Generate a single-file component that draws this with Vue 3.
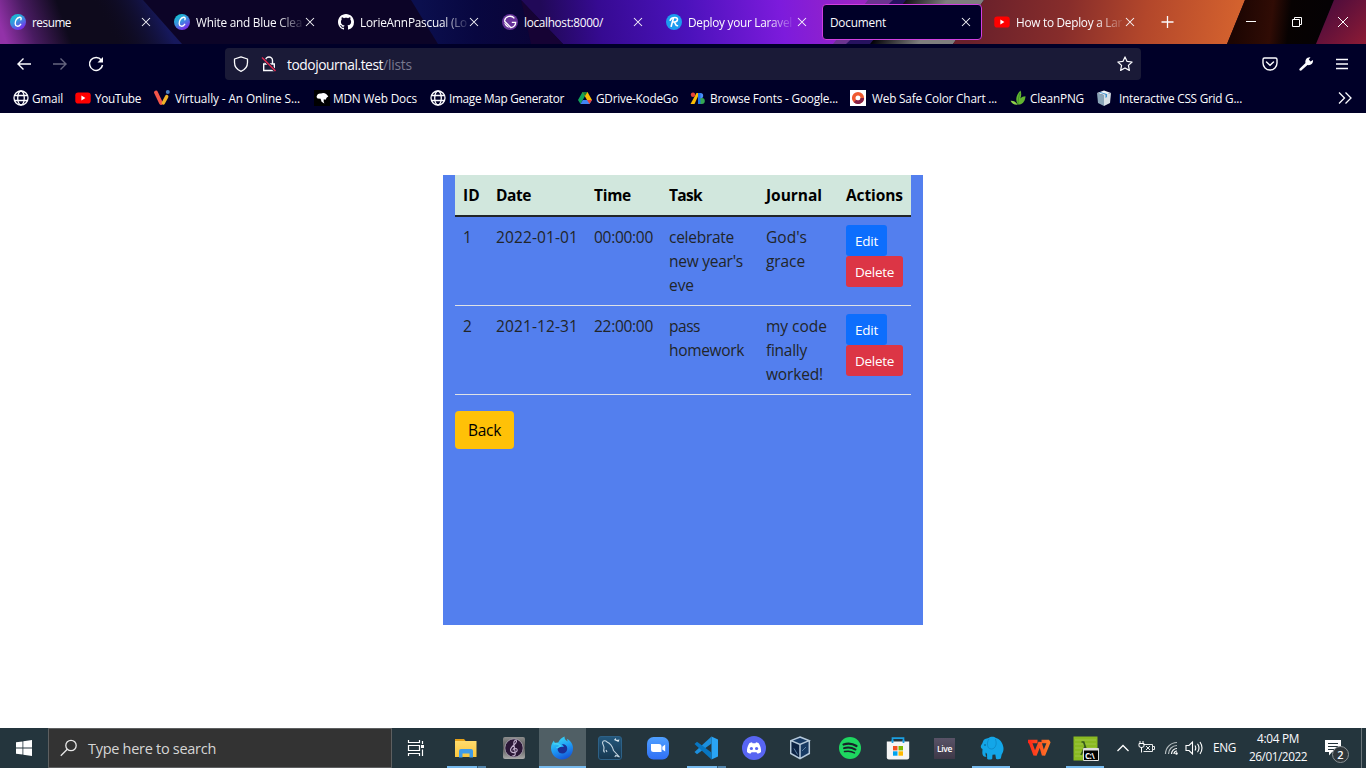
<script setup>
const tabs = [
  { title: 'resume', icon: 'canva', w: 39 },
  { title: 'White and Blue Clea', icon: 'canva', w: 106, fade: true },
  { title: 'LorieAnnPascual (Lo', icon: 'github', w: 107, fade: true },
  { title: 'localhost:8000/', icon: 'gatsby', w: 79 },
  { title: 'Deploy your Laravel', icon: 'render', w: 104, fade: true },
  { title: 'Document', active: true, w: 56 },
  { title: 'How to Deploy a Lar', icon: 'youtube', w: 106, fade: true },
]
const bookmarks = [
  { t: 'Gmail', icon: 'globe', w: 31, cell: 62, gap: 3 },
  { t: 'YouTube', icon: 'youtube', w: 46, cell: 79, gap: 4 },
  { t: 'Virtually - An Online S...', icon: 'virtually', w: 125, cell: 160, gap: 5 },
  { t: 'MDN Web Docs', icon: 'mdn', w: 84, cell: 116, gap: 3 },
  { t: 'Image Map Generator', icon: 'globe', w: 115, cell: 147, gap: 3 },
  { t: 'GDrive-KodeGo', icon: 'drive', w: 82, cell: 113, gap: 3 },
  { t: 'Browse Fonts - Google...', icon: 'fonts', w: 128, cell: 160, gap: 4 },
  { t: 'Web Safe Color Chart ...', icon: 'chart', w: 125, cell: 160, gap: 6 },
  { t: 'CleanPNG', icon: 'leaf', w: 54, cell: 86, gap: 4 },
  { t: 'Interactive CSS Grid G...', icon: 'cube', w: 123, cell: 150, gap: 7 },
]
const heads = [['ID', 17], ['Date', 35], ['Time', 37], ['Task', 33], ['Journal', 56], ['Actions', 57]]
const rows = [
  [[['1', 8]], [['2022-01-01', 82]], [['00:00:00', 59]],
    [['celebrate', 65], ["new year's", 74], ['eve', 25]], [["God's", 41], ['grace', 39]]],
  [[['2', 8]], [['2021-12-31', 82]], [['22:00:00', 59]],
    [['pass', 31], ['homework', 75]], [['my code', 61], ['finally', 41], ['worked!', 57]]],
]
const apps = [
  { icon: 'explorer', line: 'multi' }, { icon: 'music' }, { icon: 'firefox', on: true },
  { icon: 'mysql' }, { icon: 'zoom' }, { icon: 'vscode', line: 'multi' }, { icon: 'discord' },
  { icon: 'vbox' }, { icon: 'spotify' }, { icon: 'store', s: true }, { icon: 'live', s: true },
  { icon: 'elephant', s: true, line: 'one' }, { icon: 'wps', s: true }, { icon: 'cmd', s: true, line: 'one' },
]
// Tightens or loosens tracking so that a label takes the given width.
const vFit = {
  mounted(el, { value }) {
    if (!value) return
    const r = document.createRange()
    r.selectNodeContents(el)
    const natural = r.getBoundingClientRect().width
    el.style.letterSpacing = (value - natural) / el.textContent.length + 'px'
  },
}
</script>

<template>
  <div class="screen">
    <svg class="defs" width="0" height="0">
      <defs>
        <linearGradient id="gCanva" x1="0" y1="0" x2=".6" y2="1"><stop offset=".1" stop-color="#12c3cf" /><stop offset=".55" stop-color="#3b8fe0" /><stop offset="1" stop-color="#7a2be8" /></linearGradient>
        <linearGradient id="gFire" x1=".2" y1="0" x2=".6" y2="1"><stop offset="0" stop-color="#3fe0f5" /><stop offset=".5" stop-color="#1f9ff5" /><stop offset="1" stop-color="#1554d8" /></linearGradient>
        <linearGradient id="gWps" x1="0" y1="0" x2="1" y2="0"><stop offset="0" stop-color="#ff2418" /><stop offset="1" stop-color="#ff7a28" /></linearGradient>
        <linearGradient id="gZoom" x1="0" y1="0" x2="0" y2="1"><stop offset="0" stop-color="#4fa0ff" /><stop offset="1" stop-color="#2f6ff5" /></linearGradient>
        <linearGradient id="gFolder" x1="0" y1="0" x2="0" y2="1"><stop offset="0" stop-color="#ffdc6e" /><stop offset="1" stop-color="#fbc63c" /></linearGradient>
        <linearGradient id="gMetal" x1="0" y1="0" x2="0" y2="1"><stop offset="0" stop-color="#8d8d8d" /><stop offset=".5" stop-color="#555" /><stop offset="1" stop-color="#aaa" /></linearGradient>
        <linearGradient id="gMysql" x1="0" y1="0" x2="0" y2="1"><stop offset="0" stop-color="#24587d" /><stop offset="1" stop-color="#17374f" /></linearGradient>
      </defs>
      <symbol id="canva" viewBox="0 0 16 16"><circle cx="8" cy="8" r="8" fill="url(#gCanva)" /><path d="M10.900 5.800c.7-1.700 0-2.700-1.300-2.500C6.800 3.700 5 7 5.200 9.700c.2 3 3.400 3.400 5.500.6" fill="none" stroke="#fff" stroke-width="1.400" stroke-linecap="round" /></symbol>
      <symbol id="github" viewBox="0 0 16 16"><path fill="#fff" d="M8 0C3.580 0 0 3.580 0 8c0 3.540 2.290 6.530 5.470 7.590.4.070.55-.17.55-.38 0-.19-.010-.82-.010-1.490-2.010.37-2.530-.49-2.690-.94-.09-.23-.48-.94-.82-1.130-.28-.15-.68-.52-.010-.53.63-.010 1.080.58 1.230.82.72 1.210 1.870.87 2.330.66.070-.52.28-.87.51-1.070-1.780-.2-3.640-.89-3.640-3.950 0-.87.31-1.590.82-2.150-.080-.2-.36-1.020.080-2.120 0 0 .67-.21 2.200.82.64-.18 1.320-.27 2-.27s1.360.09 2 .27c1.530-1.040 2.200-.82 2.200-.82.44 1.100.16 1.920.080 2.120.51.56.82 1.270.82 2.150 0 3.070-1.870 3.750-3.650 3.950.29.25.54.73.54 1.480 0 1.070-.010 1.930-.010 2.200 0 .21.15.46.55.38A8.010 8.010 0 0 0 16 8c0-4.420-3.580-8-8-8z" /></symbol>
      <symbol id="gatsby" viewBox="0 0 16 16"><circle cx="8" cy="8" r="8" fill="#663399" /><path d="M2.200 8.300 7.700 13.800A5.800 5.800 0 0 1 2.200 8.300z" fill="#fff" /><path d="M2.400 7 9 13.700A5.800 5.800 0 0 0 13.700 8.300H9.800M12.400 4.300A5.700 5.700 0 0 0 2.500 6.800" fill="none" stroke="#fff" stroke-width="1.300" /></symbol>
      <symbol id="render" viewBox="0 0 16 16"><circle cx="8" cy="8" r="8" fill="#1c9cf0" /><path d="M4.200 6.200C5 3.800 7 3.500 9 3.500c3.600 0 3.200 4-.6 4.500L6.700 8M7.400 4.200 5.200 12.300M8.600 8.200c.8 1 .6 3.600 2.900 3.500" fill="none" stroke="#fff" stroke-width="1.600" stroke-linecap="round" /></symbol>
      <symbol id="youtube" viewBox="0 0 16 16"><rect x=".3" y="2.400" width="15.400" height="11.200" rx="2.800" fill="#f00" /><path d="M6.400 5.600v4.800L10.400 8z" fill="#fff" /></symbol>
      <symbol id="globe" viewBox="0 0 16 16"><g fill="none" stroke="#fbfbfe" stroke-width="1.300"><circle cx="8" cy="8" r="7" /><ellipse cx="8" cy="8" rx="3.300" ry="7" /><path d="M1.500 5.500h13M1.500 10.500h13" /></g></symbol>
      <symbol id="virtually" viewBox="0 0 16 16"><path d="M2 2.500 7 13" stroke="#f4554a" stroke-width="3.800" stroke-linecap="round" /><path d="M12.700 6.600 9.300 13" stroke="#f0b429" stroke-width="3.400" stroke-linecap="round" /><circle cx="13.800" cy="2" r="2" fill="#4a7fc0" /></symbol>
      <symbol id="mdn" viewBox="0 0 16 16"><rect width="16" height="16" fill="#000" /><path d="M2.500 7C3 4 5 3 7 3.500 10 2 13 4 14.300 6.500l-1.500 1-1.300 2.200-1.700-.5-.2 2 .8 2.300-2.800-1.700-1-3-3-.2z" fill="#fff" /></symbol>
      <symbol id="drive" viewBox="0 0 16 16"><path d="M5.500 2 1 10l2.500 4L8 6z" fill="#12a45a" /><path d="M5.500 2h5L15 10h-5z" fill="#fbbc04" /><path d="M10.500 2h-5L8 6z" fill="#188038" /><path d="M3.500 14h9L15 10H5.800z" fill="#4285f4" /><path d="m12.500 14 2.500-4h-5z" fill="#ea4335" /></symbol>
      <symbol id="fonts" viewBox="0 0 16 16"><path d="M6.500 3h3L4.500 14H.5z" fill="#fbbc04" /><circle cx="3" cy="4.700" r="2.200" fill="#ea4335" /><path d="M8 3h3v11H8z" fill="#1a73e8" /><path d="M10.500 3a2.700 2.700 0 0 1 0 5.400z" fill="#4b8df8" /><path d="M10.500 8h1.300a3 3 0 0 1 0 6h-1.300z" fill="#34a853" /></symbol>
      <symbol id="chart" viewBox="0 0 16 16"><rect width="16" height="16" fill="#fff" /><circle cx="8" cy="8" r="4.300" fill="none" stroke="#ef5a30" stroke-width="3.600" /><path d="M5 11A4.300 4.300 0 0 0 12.300 8" fill="none" stroke="#842047" stroke-width="3.600" /></symbol>
      <symbol id="leaf" viewBox="0 0 16 16"><path d="M7.500 14C5 10 6.500 4 10.500.5c1.200 3 .8 5.500-.2 8 1.500-1.500 3-2.300 5.200-2.300-.2 4-2 7.500-6 8.300H8z" fill="#62b531" /><path d="M7.500 14.500C5.500 11 3 10.500.5 10.700c1.500 3 4 4.500 7.500 4z" fill="#8fd14a" /><path d="M8 14C8 10 8.800 6 10 3" fill="none" stroke="#3a8d22" stroke-width=".8" /></symbol>
      <symbol id="cube" viewBox="0 0 16 16"><path d="m1 3 7 2v11l-6-3z" fill="#8aa5b8" /><path d="m8 5 7-2-1 10-6 3z" fill="#d8e0e6" /><path d="m1 3 7-2.500L15 3 8 5z" fill="#eff4f7" /><path d="m4 2 7 2v3L9.500 8V4.600L3 2.600z" fill="#3c91cf" /></symbol>
      <symbol id="x" viewBox="0 0 16 16"><path d="m4 4 8 8m0-8-8 8" stroke="#fbfbfe" stroke-width="1.050" /></symbol>

      <symbol id="explorer" viewBox="0 0 24 24"><path d="M1 3h9l2 2.500H1z" fill="#e6a117" /><path d="M1 5h21.500v16H1z" fill="url(#gFolder)" /><path d="M5 21.500V15q0-2 2-2h10q2 0 2 2v6.500h-3.500v-4h-7v4z" fill="#3f9be8" /></symbol>
      <symbol id="music" viewBox="0 0 24 24"><rect x="1" y="1" width="22" height="22" rx="2" fill="url(#gMetal)" /><circle cx="12" cy="12" r="9.200" fill="#2b1737" stroke="#b9b3c0" stroke-width=".8" /><path d="M10.500 19.500c2 1 3 -.5 2.700-2.500L11.800 7.500C11.400 4.500 14.500 3 14.500 5.500S8.500 10.500 8.500 14c.2 3.600 6.800 3.300 6.700 0-.2-2.600-4.400-2.200-4.100.4" fill="none" stroke="#c5b3d0" stroke-width="1.100" /></symbol>
      <symbol id="firefox" viewBox="0 0 24 24"><path d="M1 12C1 9 2.500 6 4 4.500c0 1 .5 2 1.200 2.600.8-.5 2-.7 3-.5C9.500 3.500 12 1.500 14.500.5c-.2 2.500 1.300 3.700 3 5 0-1-.2-1.900-.7-2.800 4 2 6.700 6 6.200 10.300C22.600 19 18 23.500 12 23.500 6 23.500 1 18.500 1 12z" fill="url(#gFire)" /><path d="M8 10c1.300 1.300 3.500 1.200 6 .8-.7-1.200-1.400-1.800-2.300-2.500 3.700-.3 5.800 1.800 5.500 5-.3 2.600-2.300 4.200-5 4.200-3.600 0-5.500-3.300-4.200-7.500z" fill="#1b2f96" /><path d="M3.500 8c2-.8 4.600-.4 7 1.700-1 1.200-3 1.500-4 2.300" fill="none" stroke="#41cff5" stroke-width="1.600" /></symbol>
      <symbol id="mysql" viewBox="0 0 24 24"><rect x=".5" y=".5" width="23" height="23" rx="2.500" fill="url(#gMysql)" stroke="#2d6187" /><path d="M6.500 16.500c-1.200-1.500-1-3-.5-4.500.2-2-1.500-3.500-1.500-5.500C5 4 7.800 4.500 9 6c4 1.500 5.500 4.500 6.500 8.500l6 6.500-3.700-1.500-1 1.500M8 14l1 2" fill="none" stroke="#c5d6e2" stroke-width="1.100" /><path d="m16 4 1.500-2 1 2 3-.5-1 2.500z" fill="#dce7ef" /></symbol>
      <symbol id="zoom" viewBox="0 0 24 24"><rect x="1" y="1" width="22" height="22.500" rx="6.500" fill="url(#gZoom)" /><path d="M5 8h8q2.500 0 2.500 2.500V16H7.500Q5 16 5 13.500z" fill="#fff" /><path d="M16.300 10.700 19.200 8.500v7l-2.900-2z" fill="#fff" /></symbol>
      <symbol id="vscode" viewBox="0 0 24 24"><path d="M17.500.5 24 3.500v17l-6.500 3z" fill="#2aa4f4" /><path d="M17.500.5v7L3 18.200.5 16z" fill="#1c8fdd" /><path d="M17.500 23.500v-7L3 5.800.5 8z" fill="#0876c2" /></symbol>
      <symbol id="discord" viewBox="0 0 24 24"><circle cx="12" cy="12" r="12" fill="#5865f2" /><path d="M7.500 7 10 6.300l.5 1h3l.5-1 2.500.7c1.800 2.500 2.800 5.500 2.500 9-1.300 1-2.600 1.500-3.700 1.600l-.8-1.400h-5l-.8 1.400C7.600 17.500 6.300 17 5 16c-.3-3.500.8-6.500 2.500-9z" fill="#fff" /><circle cx="9.400" cy="12.500" r="1.600" fill="#5865f2" /><circle cx="14.600" cy="12.500" r="1.600" fill="#5865f2" /></symbol>
      <symbol id="vbox" viewBox="0 0 24 24"><path d="M.5 4.500 10 .5l9.500 4v13L10 23l-9.500-5.500z" fill="#173a63" /><path d="M.5 4.500 10 8.500v14.500L.5 17.500z" fill="#0c2344" /><path d="m10 1 9 3.600-9 3.900-9-3.900zM10 8.500V23M19.300 4.700v12.800L10 22.700.7 17.500V4.700" fill="none" stroke="#b6c9da" stroke-width="1.500" /><path d="m4 12.500 3.500 6M16 11l-4 4" stroke="#5e82a6" /></symbol>
      <symbol id="spotify" viewBox="0 0 24 24"><circle cx="12" cy="12" r="11" fill="#1ed760" /><g fill="none" stroke="#17232a" stroke-linecap="round"><path d="M5.500 8.500c4-1.300 9.300-.8 13 1.500" stroke-width="2.200" /><path d="M6 12.200c4-1.200 8-.6 11.500 1.400" stroke-width="1.900" /><path d="M6.500 15.600c3.600-.9 7-.5 10 1.300" stroke-width="1.500" /></g></symbol>
      <symbol id="store" viewBox="0 0 24 24"><path d="M6.500 7V2.200h11V7" fill="none" stroke="#1ba0e2" stroke-width="1.700" /><path d="M.8 5.500h22.400v16q0 2-2 2H2.800q-2 0-2-2z" fill="#f5f5f5" /><path d="M6.500 7V4m11 3V4" stroke="#1ba0e2" stroke-width="1.700" /><path d="M7 10h4.500v4.400H7z" fill="#f25022" /><path d="M12.500 10H17v4.400h-4.500z" fill="#7fba00" /><path d="M7 15.300h4.500v4.400H7z" fill="#00a4ef" /><path d="M12.500 15.300H17v4.400h-4.500z" fill="#ffb900" /></symbol>
      <symbol id="elephant" viewBox="0 0 24 24"><path d="M.8 11C.5 9 2.500 8 3 5.500 3.500 3 6 2.500 8.500 2c2-1.800 5.500-1.800 7.500 0 4 1 7 5 7.500 10 .2 3-.8 5-1.800 6.500L20.800 22.500q-2.500 1.300-4.800.2l-.7-4.200-2.800.3-.3 4.200q-2.700 1-5 0L7 18l-1.200-1.500c-.5 1.500-.3 3 .7 4-2.500.8-4-.8-4.200-3.500L2.500 13q-1.500-.7-1.700-2z" fill="#13a6e8" /><path d="M9 3c-1.800 2-2 6-.8 8.500 2 2 4.300 1.800 6 .5 2.300-2 2.500-5.500 1.200-9" fill="none" stroke="#0c86c4" stroke-width=".8" /><circle cx="5" cy="9" r=".7" fill="#053a5c" /></symbol>
      <symbol id="wps" viewBox="0 0 24 24"><path d="M1 5.500h9.500M3 5.500 8 19l5-12.500L16.500 19 22 5.500h-7.500" fill="none" stroke="url(#gWps)" stroke-width="3.400" stroke-linejoin="bevel" /></symbol>
      <symbol id="cmd" viewBox="0 0 26 26"><path d="M.5.500h24v24H.5z" fill="#8aba22" /><path d="M2 4h21M2 8h21M2 12h21M2 16h21M2 20h21" stroke="#a4ca50" stroke-width=".8" /><path d="M8.500 6h2.200l4.300 13M12 10.500 8 19" fill="none" stroke="#35581d" stroke-width="1.700" /><path d="M10.500 12.500h15v12h-15z" fill="#000" stroke="#ddd" /><path d="M10.500 13.500h15" stroke="#ddd" stroke-width="2" /></symbol>
    </svg>

    <header class="strip">
      <svg class="theme" width="1366" height="44" viewBox="0 0 1366 44" preserveAspectRatio="none">
        <defs>
          <linearGradient id="a1" gradientUnits="userSpaceOnUse" x1="0" y1="24" x2="58" y2="4"><stop offset="0" stop-color="#9232a8" /><stop offset=".45" stop-color="#481b60" /><stop offset="1" stop-color="#0e0a1c" /></linearGradient>
          <linearGradient id="a2" gradientUnits="userSpaceOnUse" x1="115" y1="44" x2="163" y2="20"><stop offset="0" stop-color="#0e0a1c" stop-opacity="0" /><stop offset="1" stop-color="#16185c" /></linearGradient>
          <linearGradient id="a3" gradientUnits="userSpaceOnUse" x1="420" y1="0" x2="560" y2="0"><stop offset="0" stop-color="#0b0f4e" /><stop offset=".4" stop-color="#080740" /><stop offset="1" stop-color="#0b0334" /></linearGradient>
          <linearGradient id="a4" gradientUnits="userSpaceOnUse" x1="545" y1="40" x2="860" y2="0"><stop offset="0" stop-color="#210958" /><stop offset=".18" stop-color="#360a92" /><stop offset=".45" stop-color="#4b12bb" /><stop offset=".75" stop-color="#7d1bdc" /><stop offset="1" stop-color="#9b25c4" /></linearGradient>
          <linearGradient id="a5" gradientUnits="userSpaceOnUse" x1="975" y1="0" x2="1235" y2="44"><stop offset="0" stop-color="#69202b" /><stop offset=".35" stop-color="#872d2b" /><stop offset=".65" stop-color="#b3472b" /><stop offset="1" stop-color="#d4622e" /></linearGradient>
          <linearGradient id="a6" gradientUnits="userSpaceOnUse" x1="1235" y1="20" x2="1325" y2="30"><stop offset="0" stop-color="#1c0502" /><stop offset=".4" stop-color="#300c05" /><stop offset=".6" stop-color="#070202" /><stop offset="1" stop-color="#050204" /></linearGradient>
          <linearGradient id="a7" gradientUnits="userSpaceOnUse" x1="1320" y1="0" x2="1366" y2="44"><stop offset="0" stop-color="#450a3d" /><stop offset="1" stop-color="#8d1b35" /></linearGradient>
          <linearGradient id="a8" gradientUnits="userSpaceOnUse" x1="900" y1="0" x2="933" y2="22"><stop offset="0" stop-color="#030207" /><stop offset="1" stop-color="#7e7e7e" /></linearGradient>
        </defs>
        <path d="M0 0h1366v44H0z" fill="#0c0427" />
        <path d="M0 0h143l39 44H0z" fill="url(#a1)" />
        <path d="M70 0h73l39 44H70z" fill="url(#a2)" />
        <path d="M411 0h130l22 44H438z" fill="url(#a3)" />
        <path d="M521 0h350l-36 44H563z" fill="url(#a4)" />
        <path d="m521 0 42 44h-32z" fill="#160334" />
        <path d="M868 0h27l-45 44h-17z" fill="#6b348f" />
        <path d="M893 0h15l-36 44h-26z" fill="#26125f" />
        <path d="M906 0h78l-31 44h-83z" fill="url(#a8)" />
        <path d="M984 0h261l-18 44H953z" fill="url(#a5)" />
        <path d="M1245 0h89l-18 44h-89z" fill="url(#a6)" />
        <path d="M1334 0h32v44h-50z" fill="url(#a7)" />
      </svg>
      <div class="tabs">
        <div v-for="(t, i) in tabs" :key="i" class="tab" :class="{ active: t.active }">
          <svg v-if="t.icon" class="i16"><use :href="'#' + t.icon" /></svg>
          <span class="label"><span v-fit="t.w" :class="{ fade: t.fade }">{{ t.title }}</span></span>
          <svg class="i16 close"><use href="#x" /></svg>
        </div>
      </div>
      <svg class="i16 plus" viewBox="0 0 16 16"><path d="M7.500 2v12M1.500 8h12" stroke="#fbfbfe" stroke-width="1.300" /></svg>
      <div class="win">
        <svg width="46" height="44"><path d="M18 21.500h10" stroke="#fff" /></svg>
        <svg width="46" height="44"><path d="M18.500 19.500h7v7h-7zM20.500 19v-1.500h7v7H26" fill="none" stroke="#fff" /></svg>
        <svg width="46" height="44"><path d="m18 17 10 10m0-10-10 10" stroke="#fff" /></svg>
      </div>
    </header>

    <nav class="toolbar">
      <div class="navs">
        <svg class="i16" viewBox="0 0 16 16"><path d="M15 8H1.500M7.500 2.500 2 8l5.500 5.500" fill="none" stroke="#fbfbfe" stroke-width="1.400" /></svg>
        <svg class="i16" viewBox="0 0 16 16"><path d="M1 8h13.500M8.500 2.500 14 8l-5.500 5.500" fill="none" stroke="#65657f" stroke-width="1.400" /></svg>
        <svg class="i16" viewBox="0 0 16 16"><path d="M13.300 4A6.500 6.500 0 1 0 14.500 9" fill="none" stroke="#fbfbfe" stroke-width="1.500" /><path d="M9.500 6.500H15V1z" fill="#fbfbfe" /></svg>
      </div>
      <div class="url">
        <svg class="i16" viewBox="0 0 16 16"><path d="M8 .8 14.500 3v3.500c0 4-2 7-6.500 8.800C3.500 13.500 1.500 10.500 1.500 6.500V3z" fill="none" stroke="#fbfbfe" stroke-width="1.300" stroke-linejoin="round" /></svg>
        <svg class="i16 lock" viewBox="0 0 16 16"><path d="M2.700 8h10.600v6.500H2.700zM4.500 8V4.500a3.500 3.500 0 0 1 7 0V8" fill="none" stroke="#fbfbfe" stroke-width="1.400" /><path d="M1 1.500 14.500 15" stroke="#1a1a37" stroke-width="3" /><path d="M1 1.500 14.500 15" stroke="#e22850" stroke-width="1.400" /></svg>
        <span class="addr"><span v-fit="96">todojournal.test</span><span v-fit="29" class="dim">/lists</span></span>
        <svg class="i16 star" viewBox="0 0 16 16"><path d="m8 .9 2.100 4.500 5 .6-3.700 3.400 1 5L8 12l-4.400 2.400 1-5L.9 6l5-.6z" fill="none" stroke="#fbfbfe" stroke-width="1.200" stroke-linejoin="round" /></svg>
      </div>
      <div class="tools">
        <svg class="i16" viewBox="0 0 16 16"><path d="M2.500 2h11q1.500 0 1.500 1.500V7A7 7 0 0 1 1 7V3.500Q1 2 2.500 2zM4.500 6 8 9.300 11.500 6" fill="none" stroke="#fbfbfe" stroke-width="1.400" stroke-linecap="round" /></svg>
        <svg class="i16" viewBox="0 0 16 16"><path d="m1.300 13 6.200-6C6.800 4 9 .7 12.500 1.300L10.800 3.500 12.500 5.500 15 4c.5 3.300-2.500 5.800-5.500 5L3 14.800Q1 15 1.300 13z" fill="#fbfbfe" /></svg>
        <svg class="i16" viewBox="0 0 16 16"><path d="M2 3.500h12M2 8h12M2 12.500h12" stroke="#fbfbfe" stroke-width="1.300" /></svg>
      </div>
    </nav>

    <div class="marks">
      <div v-for="b in bookmarks" :key="b.t" class="mark" :style="{ width: b.cell + 'px', gap: b.gap + 'px' }">
        <svg class="i16"><use :href="'#' + b.icon" /></svg><span v-fit="b.w">{{ b.t }}</span>
      </div>
      <svg class="i16 more" viewBox="0 0 16 16"><path d="m2 2.500 5.500 5.500L2 13.500M8.500 2.500 14 8l-5.500 5.500" fill="none" stroke="#fbfbfe" stroke-width="1.300" /></svg>
    </div>

    <main class="page">
      <section class="card">
        <table>
          <colgroup><col class="c1"><col class="c2"><col class="c3"><col class="c4"><col class="c5"><col class="c6"></colgroup>
          <thead><tr><th v-for="h in heads" :key="h[0]"><span v-fit="h[1]">{{ h[0] }}</span></th></tr></thead>
          <tbody>
            <tr v-for="(r, i) in rows" :key="i">
              <td v-for="(c, j) in r" :key="j"><div v-for="l in c" :key="l[0]" v-fit="l[1]">{{ l[0] }}</div></td>
              <td class="acts">
                <button class="btn edit"><span v-fit="23">Edit</span></button>
                <button class="btn del"><span v-fit="39">Delete</span></button>
              </td>
            </tr>
          </tbody>
        </table>
        <button class="back"><span v-fit="33">Back</span></button>
      </section>
    </main>

    <footer class="taskbar">
      <div class="start"><svg width="16" height="16" viewBox="0 0 16 16"><path d="m0 2.300 6.500-.9v6.200H0zM7.300 1.300 16 0v7.600H7.300zM0 8.400h6.500v6.200L0 13.700zM7.300 8.400H16V16l-8.700-1.300z" fill="#fff" /></svg></div>
      <div class="search">
        <svg width="18" height="18" viewBox="0 0 18 18"><circle cx="11" cy="6.500" r="5.200" fill="none" stroke="#e8e8e8" stroke-width="1.300" /><path d="m7.300 10.300-6.500 6.500" stroke="#e8e8e8" stroke-width="1.300" /></svg>
        <span v-fit="128">Type here to search</span>
      </div>
      <div class="view"><svg width="18" height="18" viewBox="0 0 18 18"><path d="M1.500 1v2.500h11V1M1.500 17v-2.500h11V17M1.500 6.500h11v5h-11zM15.500 2v3M15.500 10.500V17" fill="none" stroke="#fff" stroke-width="1.200" /><path d="M14 6h3v3h-3z" fill="#fff" /></svg></div>
      <div v-for="a in apps" :key="a.icon" class="app" :class="{ s: a.s, on: a.on }">
        <span v-if="a.icon === 'live'" class="live"><span v-fit="15">Live</span></span>
        <svg v-else class="appicon" :class="a.icon"><use :href="'#' + a.icon" /></svg>
        <span v-if="a.icon === 'cmd'" class="prompt"><span v-fit="12">C:\_</span></span>
        <i v-if="a.line || a.on" class="line" :class="[a.line, { full: a.on }]"></i>
      </div>
      <div class="tray">
        <svg width="14" height="16"><path d="m1.500 11 5.500-5.500L12.500 11" fill="none" stroke="#fff" stroke-width="1.300" /></svg>
        <svg class="bat" width="17" height="16"><path d="M5.500 4.500h9v7h-9M15 6.500h1.500v3H15M8 6l4 4m0-4-4 4" fill="none" stroke="#e8eaeb" /><path d="M1 3.500h5v3q-2.500 2.500-5 0zM2 1v3M5 1v3M3.500 7v5.500" fill="none" stroke="#fff" /></svg>
        <svg class="wifi" width="14" height="16"><g fill="none"><path d="M1.500 14A11.500 11.500 0 0 1 13 2.500M4.500 14A8.500 8.500 0 0 1 13 5.500" stroke="#b4bcbf" stroke-width="1.200" /><path d="M7.500 14A5.500 5.500 0 0 1 13 8.500M10 14a3 3 0 0 1 3-3" stroke="#fff" stroke-width="1.200" /></g><circle cx="12.500" cy="13.500" r="1.200" fill="#fff" /></svg>
        <svg class="vol" width="18" height="16"><path d="M1 5.500h3L7.500 2v12L4 10.500H1zM10 5.500q1.500 2.500 0 5M12.500 3.700q3 4.300 0 8.600M15 2q4 6 0 12" fill="none" stroke="#fff" stroke-width="1.100" /></svg>
        <span class="eng"><span v-fit="23">ENG</span></span>
        <div class="clock"><div><span v-fit="42">4:04 PM</span></div><div><span v-fit="58">26/01/2022</span></div></div>
        <div class="note">
          <svg width="16" height="17"><path d="M0 1h16v12H7l-3 3.500V13H0z" fill="#fff" /><path d="M3 4.500h10M3 7.500h10M3 10.500h6" stroke="#24333a" /></svg>
          <b class="badge">2</b>
        </div>
        <i class="edge"></i>
      </div>
    </footer>
  </div>
</template>

<style>
body { background: #fff; overflow: hidden; }
</style>
<style scoped>
.screen { width: 1366px; height: 768px; display: flex; flex-direction: column; overflow: hidden; font-family: "Open Sans", "Noto Sans", sans-serif; font-size: 11.800px; color: #fbfbfe; white-space: nowrap; }
.screen * { box-sizing: border-box; }
svg { display: block; flex: none; }
.defs { position: absolute; }
.i16 { width: 16px; height: 16px; }
.strip { position: relative; height: 44px; flex: none; display: flex; align-items: center; }
.theme { position: absolute; inset: 0; }
.tabs { position: relative; display: flex; }
.tab { width: 164px; height: 44px; padding: 0 10px; display: flex; align-items: center; gap: 6px; }
.tab.active { width: 160px; height: 36px; margin: 4px 2px; padding: 0 7px; border: 1px solid #d03fe0; border-radius: 4px; background: #000028; }
.label { flex: 1; min-width: 0; line-height: 18px; }
.close { margin-left: -2px; }
.fade { display: inline-block; -webkit-mask-image: linear-gradient(90deg, #000 76%, rgba(0, 0, 0, .12)); mask-image: linear-gradient(90deg, #000 76%, rgba(0, 0, 0, .12)); }
.plus { position: relative; margin-left: 12px; }
.win { position: relative; margin-left: auto; display: flex; }
.toolbar { height: 40px; flex: none; background: #000028; display: flex; align-items: center; padding-right: 16px; }
.navs { width: 225px; display: flex; gap: 20px; padding-left: 16px; }
.url { width: 916px; height: 32px; border-radius: 4px; background: #1a1a37; display: flex; align-items: center; padding: 0 8px; }
.lock { margin-left: 12px; }
.addr { margin-left: 10px; padding-top: 1px; font-size: 13.800px; line-height: 20px; }
.dim { color: #78788f; }
.star { margin-left: auto; }
.tools { display: flex; gap: 20px; margin-left: auto; }
.marks { height: 29px; flex: none; background: #000028; display: flex; align-items: center; padding: 0 13px 1px; }
.mark { display: flex; align-items: center; flex: none; line-height: 18px; }
.more { margin-left: auto; }
.page { height: 615px; flex: none; background: #fff; padding-top: 62px; color: #212529; }
.card { width: 480px; height: 450px; margin: 0 auto; padding: 0 12px; background: #537fee; }
table { width: 456px; table-layout: fixed; border-collapse: separate; border-spacing: 0; font-size: 15.500px; line-height: 24px; }
.c1 { width: 33px; } .c2 { width: 98px; } .c3 { width: 75px; } .c4 { width: 97px; } .c5 { width: 80px; } .c6 { width: 73px; }
th { height: 42px; padding: 8px; text-align: left; background: #d1e7dd; color: #000; border-bottom: 2px solid #212529; }
td { height: 89px; padding: 8px; vertical-align: top; border-bottom: 1px solid #dee2e6; }
button { font-family: inherit; border: 0; margin: 0; color: #fff; display: block; }
.btn { height: 31px; padding: 1px 9px 0; border-radius: 3px; font-size: 13.500px; line-height: 30px; text-align: left; }
.edit { width: 41px; background: #0d6efd; }
.del { width: 57px; background: #dc3545; }
.back { width: 59px; height: 38px; margin-top: 16px; padding: 0 13px; border-radius: 4px; background: #ffc107; color: #000; font-size: 15.500px; text-align: left; }
.taskbar { height: 40px; flex: none; background: #24353d; display: flex; }
.start { width: 48px; display: flex; align-items: center; justify-content: center; }
.search { width: 344px; border: 1px solid #5d5f60; background: #333; display: flex; align-items: center; padding-left: 11px; gap: 10px; font-size: 14.500px; color: #d6d6d6; }
.view { width: 50px; display: flex; align-items: center; padding-left: 15px; }
.app { position: relative; width: 48px; display: flex; align-items: center; justify-content: center; }
.app.s { width: 47px; }
.app.on { background: linear-gradient(#505f65, #505f65) 1px 0 / 47px 40px no-repeat; }
.appicon { width: 24px; height: 24px; }
.appicon.cmd { width: 26px; height: 26px; margin-top: 2px; }
.live { width: 21px; height: 21px; background: linear-gradient(#595367, #3e3848); font-size: 8.500px; font-weight: 600; line-height: 21px; text-align: center; color: #fff; }
.prompt { position: absolute; left: 23px; top: 22px; font-size: 8px; font-weight: 700; line-height: 11px; }
.line { position: absolute; left: 5px; bottom: 0; width: 38px; height: 2px; background: #76b9ed; }
.line.multi { width: 39px; background: linear-gradient(90deg, #76b9ed 30px, #35596f 30px, #35596f 31px, #5384ab 31px); }
.line.one { left: 4px; }
.line.full { left: 1px; width: 47px; }
.tray { flex: 1; display: flex; align-items: center; padding-left: 7px; position: relative; }
.bat { margin-left: 8px; } .wifi { margin-left: 9px; } .vol { margin-left: 7px; }
.eng { width: 24px; margin-left: 10px; padding-bottom: 2px; }
.clock { width: 60px; margin-left: 11px; padding-bottom: 2px; text-align: center; line-height: 18px; }
.note { position: relative; margin-left: 17px; width: 24px; height: 24px; padding-top: 3px; }
.badge { position: absolute; left: 7px; top: 10px; width: 17px; height: 17px; border: 1px solid #8b9296; border-radius: 50%; background: #30373b; font-size: 11px; line-height: 15px; text-align: center; font-weight: 600; }
.edge { position: absolute; right: 4px; top: 0; width: 1px; height: 40px; background: #6b757a; }
</style>
